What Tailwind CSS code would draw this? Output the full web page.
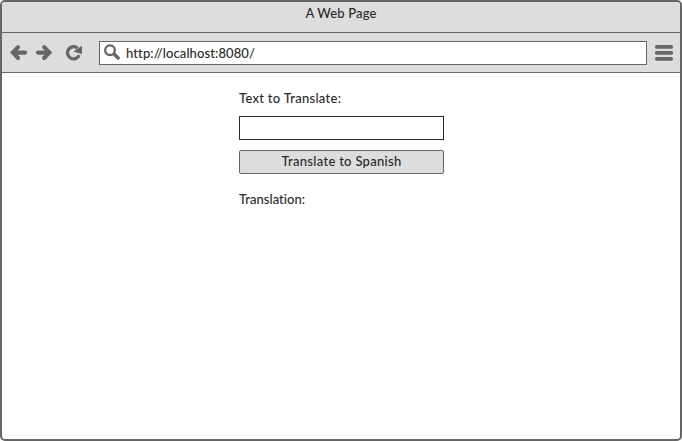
<!DOCTYPE html>
<html lang="en">
<head>
<meta charset="utf-8">
<title>A Web Page</title>
<script src="https://cdn.jsdelivr.net/npm/@tailwindcss/browser@4"></script>
</head>
<body class="bg-white font-['Lato',sans-serif] text-[13px] leading-4 font-medium text-[#2a2a2a]">
<div class="flex h-[441px] w-[682px] flex-col overflow-hidden rounded-[5px] border-2 border-[#666] bg-white">
  <header class="flex h-[31px] shrink-0 justify-center border-b border-[#666] bg-[#ddd] pt-[3px]">
    <h1 class="tracking-[0.15px]">A Web Page</h1>
  </header>
  <nav class="flex h-10 shrink-0 items-center border-b border-[#666] bg-[#ddd] pl-2 text-[#666]">
    <button aria-label="Back"><svg class="block" width="18" height="16" viewBox="0 0 18 16" fill="none" stroke="currentColor"><path d="M8 2.2 L2.8 7.6 L8 13" stroke-width="4" stroke-linecap="round"/><path d="M4 7.6H15" stroke-width="4.2" stroke-linecap="round"/><path d="M1 7.6L7.5 2V13.2Z" fill="currentColor" stroke="none"/></svg></button>
    <button class="ml-[7px]" aria-label="Forward"><svg class="block" width="18" height="16" viewBox="0 0 18 16" fill="none" stroke="currentColor"><path d="M9.2 2.2 L14.4 7.6 L9.2 13" stroke-width="4" stroke-linecap="round"/><path d="M3 7.6H14" stroke-width="4.2" stroke-linecap="round"/><path d="M16.4 7.6L10 2V13.2Z" fill="currentColor" stroke="none"/></svg></button>
    <button class="ml-3" aria-label="Reload"><svg class="block" width="18" height="16" viewBox="0 0 18 16"><path d="M12.6 3.2 A6.1 6.1 0 1 0 14.2 10.2" fill="none" stroke="currentColor" stroke-width="3.3"/><path d="M17 .8V9L8.3 6.6Z" fill="currentColor"/></svg></button>
    <div class="ml-4 flex h-6 w-[548px] items-center border border-[#666] bg-white pl-1">
      <svg class="block" width="17" height="17" viewBox="0 0 17 17" fill="none" stroke="currentColor"><circle cx="6" cy="6.2" r="4.8" stroke-width="2.3"/><path d="M10 10.1L15.2 15" stroke-width="3.4"/></svg>
      <span class="ml-[5px] tracking-[0.1px] text-[#2a2a2a]">http://localhost:8080/</span>
    </div>
    <button class="ml-2" aria-label="Menu"><svg class="block" width="18" height="16" viewBox="0 0 18 16" fill="currentColor"><rect y="0" width="18" height="3.7" rx="1.6"/><rect y="6" width="18" height="3.7" rx="1.6"/><rect y="12" width="18" height="3.7" rx="1.6"/></svg></button>
  </nav>
  <main class="ml-[237px] flex w-[205px] flex-col items-stretch pt-[17px]">
    <label for="source" class="tracking-[0.28px]">Text to Translate:</label>
    <input id="source" class="mt-[10px] h-6 border border-[#2a2a2a] bg-white px-1 outline-none">
    <button class="mt-[10px] h-6 rounded-[2px] border border-[#666] bg-[#ddd] pb-0.5 tracking-[0.3px]">Translate to Spanish</button>
    <p class="mt-[17px] tracking-[0.03px]">Translation:</p>
  </main>
</div>
</body>
</html>
